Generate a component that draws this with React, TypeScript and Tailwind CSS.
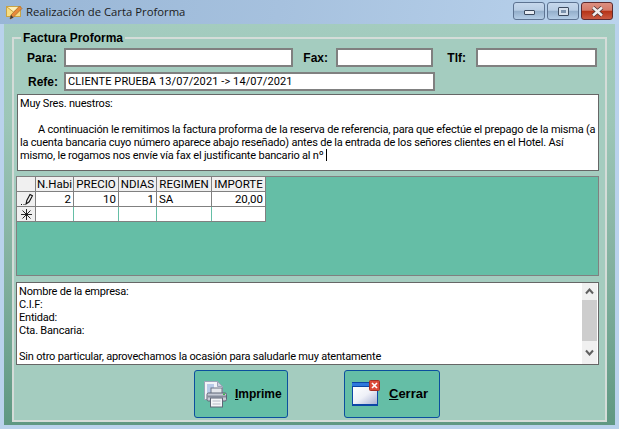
import React from 'react';

const cols = [
  { name: 'N.Habi', w: 'w-[38px]', val: '2', right: true },
  { name: 'PRECIO', w: 'w-[45px]', val: '10', right: true },
  { name: 'NDIAS', w: 'w-[38px]', val: '1', right: true },
  { name: 'REGIMEN', w: 'w-[55px]', val: 'SA', right: false },
  { name: 'IMPORTE', w: 'w-[54px]', val: '20,00', right: true },
];

function TitleIcon() {
  return (
    <svg width="17" height="16" viewBox="0 0 17 16" className="shrink-0">
      <rect x="0.5" y="2.5" width="14" height="10" fill="#f8dd82" stroke="#c9a345" />
      <path d="M1 3l6.5 5L14 3" fill="#fdf0b8" stroke="#c9a345" />
      <path d="M4 15l1-4 8.5-9 2.5 2.5-9 9z" fill="#e8893a" stroke="#a0682a" strokeWidth="0.7" />
      <path d="M4 15l1-4 2.5 2.5z" fill="#3b3b3b" />
    </svg>
  );
}

function WinButton({ kind }: { kind: 'min' | 'max' | 'close' }) {
  const bg =
    kind === 'close'
      ? 'w-[32px] bg-[linear-gradient(#dc8f80_0%,#d57a69_45%,#b63418_52%,#cb5a42_100%)] border-[#5d2a2e]'
      : 'w-[32px] bg-[linear-gradient(#c6d8ec_0%,#b8cde4_45%,#94afcb_52%,#b4cde6_100%)] border-[#5d7391]';
  return (
    <div className={`h-[18px] rounded-[3px] border flex items-center justify-center ${bg}`}>
      {kind === 'min' && <div className="w-[11px] h-[5px] mt-[3px] bg-[#e6ebf2] border border-[#3c4a5e] rounded-[1px]" />}
      {kind === 'max' && (
        <div className="w-[11px] h-[9px] bg-[#d6e0ec] border border-[#3c4a5e] rounded-[1px] flex items-center justify-center">
          <div className="w-[5px] h-[3px] bg-[#7d93ad]" />
        </div>
      )}
      {kind === 'close' && (
        <svg width="15" height="11" viewBox="0 0 15 11">
          <path d="M3 1.5l9 8M12 1.5l-9 8" stroke="#4b3436" strokeWidth="4" />
          <path d="M3 1.5l9 8M12 1.5l-9 8" stroke="#f2eeee" strokeWidth="2.4" />
        </svg>
      )}
    </div>
  );
}

function PrinterIcon() {
  return (
    <svg width="24" height="27" viewBox="0 0 24 27" className="shrink-0">
      <path d="M1.5.5h13l5 5v13h-18z" fill="#f2f4f8" stroke="#9aa4b8" />
      <path d="M14.5.5v5h5z" fill="#c9d0dc" stroke="#9aa4b8" />
      <path d="M4 4h7M4 6h7M4 8h5M4 10h5M4 12h4M4 14h4" stroke="#7fa2d8" strokeWidth="1" />
      <rect x="8" y="7" width="11" height="6" fill="#e4e7ec" stroke="#6d7484" />
      <rect x="4" y="12" width="19.5" height="8" rx="1.5" fill="#c6cbd6" stroke="#5f6676" />
      <rect x="4.5" y="14.5" width="18.5" height="2" fill="#868d9c" />
      <rect x="20" y="12.5" width="2" height="1.5" fill="#3bb44a" />
      <rect x="7.5" y="17" width="12" height="9" fill="#f4f5f8" stroke="#5f6676" />
      <path d="M9.5 20h8M9.5 23h8" stroke="#b5bac6" />
    </svg>
  );
}

function WindowIcon() {
  return (
    <div className="relative w-[27px] h-[24px] shrink-0">
      <svg width="27" height="24" viewBox="0 0 27 24">
        <defs>
          <linearGradient id="pane" x1="0" y1="0" x2="1" y2="1">
            <stop offset="0" stopColor="#ffffff" />
            <stop offset="0.5" stopColor="#eef0f7" />
            <stop offset="1" stopColor="#a9b2d4" />
          </linearGradient>
        </defs>
        <rect x="0" y="0" width="26" height="24" fill="#0c47a6" />
        <rect x="0" y="1" width="26" height="3" fill="#2f78dc" />
        <rect x="1" y="5" width="24" height="17" fill="url(#pane)" />
      </svg>
      <svg width="11" height="11" viewBox="0 0 11 11" className="absolute -top-[2px] -right-[1px]">
        <rect x="0.5" y="0.5" width="10" height="10" rx="1" fill="#dc4a38" stroke="#a53024" />
        <path d="M3 3l5 5M8 3l-5 5" stroke="#ffffff" strokeWidth="1.6" />
      </svg>
    </div>
  );
}

function Pencil() {
  return (
    <svg width="16" height="13" viewBox="0 0 16 13">
      <path d="M8 11l.8-3.5L12 1.5l2.4 1.3-3.2 6z" fill="none" stroke="#111" strokeWidth="1.1" />
      <path d="M3 11.5h1M5.5 11.5h1" stroke="#111" strokeWidth="1" />
    </svg>
  );
}

function Star() {
  return (
    <svg width="11" height="11" viewBox="0 0 11 11">
      <path d="M5.5 0v11M0 5.5h11M1.5 1.5l8 8M9.5 1.5l-8 8" stroke="#111" strokeWidth="0.9" />
    </svg>
  );
}

export default function App() {
  return (
    <div className="w-[619px] h-[429px] overflow-hidden flex flex-col bg-[#b9d2ec] font-['Roboto',sans-serif] text-[11.5px] text-black">
      {/* Title bar */}
      <div className="h-[24px] shrink-0 flex items-center pl-[6px] pr-[6px] bg-[linear-gradient(100deg,#98b6d6_0%,#a6c1de_45%,#bad3ed_100%)]">
        <TitleIcon />
        <span className="ml-[3px] font-['Open_Sans',sans-serif] text-[11.3px] text-[#1c1c1c]">Realización de Carta Proforma</span>
        <div className="ml-auto flex gap-[2px] -mt-[2px]">
          <WinButton kind="min" />
          <WinButton kind="max" />
          <WinButton kind="close" />
        </div>
      </div>

      {/* Client area */}
      <div className="mx-[4px] h-[401px] shrink-0 px-[8px] pt-[7px] bg-[linear-gradient(#a4ccbf_0%,#9cc6b7_25%,#7fae9c_65%,#5f9882_100%)]">
        <fieldset className="h-[391px] border-2 border-[#d4dcd8] bg-[#a4ccbf] pl-[3px] pt-[3px] min-w-0">
          <legend className="ml-[4px] px-[2px] font-['Liberation_Sans',sans-serif] font-bold text-[12px] leading-[14px]">Factura Proforma</legend>

          {/* Para / Fax / Tlf */}
          <div className="flex h-[19px] items-center font-['Liberation_Sans',sans-serif] font-bold text-[12px]">
            <label className="w-[47px] pr-[7px] text-right">Para:</label>
            <div className="w-[229px] h-[19px] bg-white border-2 border-[#808080]" />
            <label className="w-[43px] pr-[8px] text-right">Fax:</label>
            <div className="w-[97px] h-[19px] bg-white border-2 border-[#808080]" />
            <label className="w-[43px] pr-[10px] text-right">Tlf:</label>
            <div className="w-[121px] h-[19px] bg-white border-2 border-[#808080]" />
          </div>

          {/* Refe */}
          <div className="flex h-[19px] items-center mt-[5px]">
            <label className="w-[47px] pr-[6px] text-right font-['Liberation_Sans',sans-serif] font-bold text-[12px]">Refe:</label>
            <div className="w-[371px] h-[19px] bg-white border-2 border-[#808080] pl-[2px] leading-[15px] text-[11px] tracking-[0.1px] whitespace-nowrap">
              CLIENTE PRUEBA 13/07/2021 -&gt; 14/07/2021
            </div>
          </div>

          {/* Carta */}
          <div className="mt-[3px] w-[582px] h-[77px] bg-white border-[1.5px] border-[#666666] pl-[2px] pt-[2px] leading-[13px] text-[11px] tracking-[-0.2px] whitespace-pre overflow-hidden">
            <div>Muy Sres. nuestros:</div>
            <div>&nbsp;</div>
            <div className="pl-[18px]">A continuación le remitimos la factura proforma de la reserva de referencia, para que efectúe el prepago de la misma (a</div>
            <div>la cuenta bancaria cuyo número aparece abajo reseñado) antes de la entrada de los señores clientes en el Hotel. Así</div>
            <div>mismo, le rogamos nos envíe vía fax el justificante bancario al nº <span className="inline-block w-px h-[12px] bg-black align-[-2px]" /></div>
          </div>

          {/* Rejilla */}
          <div className="mt-[5px] -ml-px w-[583px] h-[100px] border border-[#808080] bg-[#65bea6] overflow-hidden">
            <div className="w-fit">
              <div className="flex h-[15px] bg-[#f0f0f0] border-b border-[#808080]">
                <div className="w-[19px] border-r border-[#808080]" />
                {cols.map((c) => (
                  <div key={c.name} className={`${c.w} border-r border-[#808080] text-center leading-[14px] whitespace-nowrap`}>{c.name}</div>
                ))}
              </div>
              <div className="flex h-[15px] bg-white border-b border-[#808080]">
                <div className="w-[19px] bg-[#f0f0f0] border-r border-[#808080] flex items-center justify-center"><Pencil /></div>
                {cols.map((c) => (
                  <div key={c.name} className={`${c.w} border-r border-[#808080] leading-[14px] px-[2px] ${c.right ? 'text-right' : 'text-left'}`}>{c.val}</div>
                ))}
              </div>
              <div className="flex h-[15px] bg-white border-b border-[#808080]">
                <div className="w-[19px] bg-[#f0f0f0] border-r border-[#808080] flex items-center justify-center"><Star /></div>
                {cols.map((c, i) => (
                  <div key={c.name} className={`${c.w} border-r ${i === cols.length - 1 ? 'border-[#808080]' : 'border-[#65bea6]'}`} />
                ))}
              </div>
            </div>
          </div>

          {/* Pie */}
          <div className="mt-[6px] -ml-px w-[583px] h-[83px] bg-white border-[1.5px] border-[#666666] flex overflow-hidden">
            <div className="flex-1 pl-[2px] pt-[2px] leading-[13px] text-[11px] tracking-[-0.2px] whitespace-pre">
              <div>Nombre de la empresa:</div>
              <div>C.I.F:</div>
              <div>Entidad:</div>
              <div>Cta. Bancaria:</div>
              <div>&nbsp;</div>
              <div>Sin otro particular, aprovechamos la ocasión para saludarle muy atentamente</div>
            </div>
            <div className="w-[15px] mr-[1px] flex flex-col bg-[#f0f0f0]">
              <div className="h-[17px] flex items-center justify-center">
                <svg width="9" height="7" viewBox="0 0 9 7"><path d="M1 5.5l3.5-4 3.5 4" fill="none" stroke="#606060" strokeWidth="2" /></svg>
              </div>
              <div className="h-[41px] bg-[#cdcdcd]" />
              <div className="flex-1 flex items-center justify-center">
                <svg width="9" height="7" viewBox="0 0 9 7"><path d="M1 1.5l3.5 4 3.5-4" fill="none" stroke="#606060" strokeWidth="2" /></svg>
              </div>
            </div>
          </div>

          {/* Botones */}
          <div className="mt-[5px] ml-[177px] flex gap-[56px] font-['Liberation_Sans',sans-serif]">
            <button className="w-[94px] h-[48px] flex items-center pl-[8px] gap-[8px] rounded-[3px] border border-[#0b4f9e] bg-[#65bea6] font-bold text-[12px]">
              <PrinterIcon />
              <span><span className="underline">I</span>mprime</span>
            </button>
            <button className="w-[96px] h-[48px] flex items-center pl-[7px] gap-[10px] rounded-[3px] border border-[#0b4f9e] bg-[#65bea6] font-bold text-[13px]">
              <WindowIcon />
              <span><span className="underline">C</span>errar</span>
            </button>
          </div>
        </fieldset>
      </div>
    </div>
  );
}
